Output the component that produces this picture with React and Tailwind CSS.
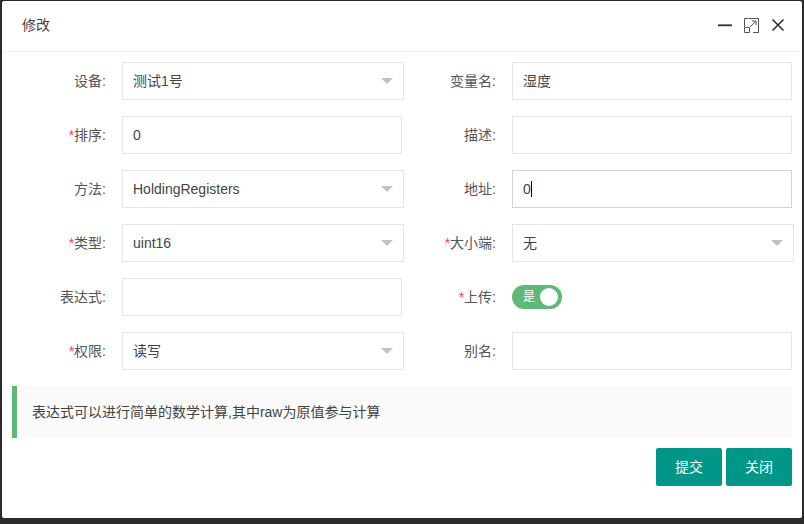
import React from "react";

const rows = [
    [
        { label: "设备", type: "select", value: "测试1号" },
        { label: "变量名", type: "input", value: "湿度" },
    ],
    [
        { label: "排序", required: true, type: "input", value: "0" },
        { label: "描述", type: "input", value: "" },
    ],
    [
        { label: "方法", type: "select", value: "HoldingRegisters" },
        { label: "地址", type: "input", value: "0", focused: true },
    ],
    [
        { label: "类型", required: true, type: "select", value: "uint16" },
        { label: "大小端", required: true, type: "select", value: "无" },
    ],
    [
        { label: "表达式", type: "input", value: "" },
        { label: "上传", required: true, type: "switch", value: "是" },
    ],
    [
        { label: "权限", required: true, type: "select", value: "读写" },
        { label: "别名", type: "input", value: "" },
    ],
];

function Field({ field }) {
    if (field.type === "switch") {
        return (
            <div className="flex shrink-0 items-center h-[24px] w-[50px] mt-[7px] rounded-full bg-[#5fb878] pl-[11px] pr-[4px] justify-between">
                <span className="text-[12px] text-white">{field.value}</span>
                <span className="w-[18px] h-[18px] rounded-full bg-white"></span>
            </div>
        );
    }

    if (field.type === "select") {
        return (
            <div className="flex shrink-0 items-center justify-between h-[38px] w-[282px] border border-[#e6e6e6] bg-white pl-[10px] pr-[10px] text-[#444]">
                <span>{field.value}</span>
                <span className="w-0 h-0 border-x-[6px] border-x-transparent border-t-[6px] border-t-[#c2c2c2]"></span>
            </div>
        );
    }

    return (
        <div className={"flex shrink-0 items-center h-[38px] w-[280px] border bg-white pl-[10px] text-[#444] " + (field.focused ? "border-[#d2d2d2]" : "border-[#e6e6e6]")}>
            <span>{field.value}</span>
            {field.focused && <span className="w-px h-[16px] bg-black"></span>}
        </div>
    );
}

export default function App() {
    return (
        <div className="h-[524px] w-[804px] bg-[#2b2b2b] pt-px pl-[2px] overflow-hidden text-[14px] font-['Liberation_Sans','Noto_Sans_CJK_SC',sans-serif]">
            <div className="w-[800px] h-[517px] bg-white rounded-[2px]">
                <div className="flex items-center justify-between h-[51px] pb-px pl-[20px] pr-[17px] border-b border-[#f0f0f0] text-[#444]">
                    <span>修改</span>
                    <div className="flex items-center gap-[12px]">
                        <svg width="14" height="15" viewBox="0 0 14 15" fill="none">
                            <path d="M0 7.3H14" stroke="#2e2d3c" strokeWidth="1.8" />
                        </svg>
                        <svg width="15" height="15" viewBox="0 0 15 15" fill="none" stroke="#555">
                            <path d="M4.5 0.5H14.5V14.5H9M0.5 9V0.5H4.5" />
                            <path d="M0.5 9.5H5.5V14.5H0.5Z" />
                            <path d="M6 9L12 3M8 3H12V7" />
                        </svg>
                        <svg width="14" height="15" viewBox="0 0 14 15" fill="none">
                            <path d="M1.5 1.5L12.5 12.5M12.5 1.5L1.5 12.5" stroke="#2e2d3c" strokeWidth="1.6" />
                        </svg>
                    </div>
                </div>

                <div className="flex flex-col gap-[16px] pt-[10px]">
                    {rows.map((row, i) => (
                        <div key={i} className="flex h-[38px]">
                            {row.map((field) => (
                                <div key={field.label} className="flex w-[390px] shrink-0">
                                    <label className="w-[104px] shrink-0 mr-[16px] text-right leading-[38px] text-[#555]">
                                        {field.required && <span className="text-[#ee4466]">*</span>}
                                        {field.label}:
                                    </label>
                                    <Field field={field} />
                                </div>
                            ))}
                        </div>
                    ))}
                </div>

                <div className="ml-[10px] mt-[16px] w-[780px] h-[52px] flex items-center bg-[#fafafa] border-l-[5px] border-[#5fb878] pl-[15px] text-[#444]">
                    表达式可以进行简单的数学计算,其中raw为原值参与计算
                </div>

                <div className="flex justify-end gap-[4px] mt-[10px] pr-[10px]">
                    <button className="w-[66px] h-[38px] rounded-[2px] bg-[#009688] text-white">提交</button>
                    <button className="w-[66px] h-[38px] rounded-[2px] bg-[#009688] text-white">关闭</button>
                </div>
            </div>
        </div>
    );
}
